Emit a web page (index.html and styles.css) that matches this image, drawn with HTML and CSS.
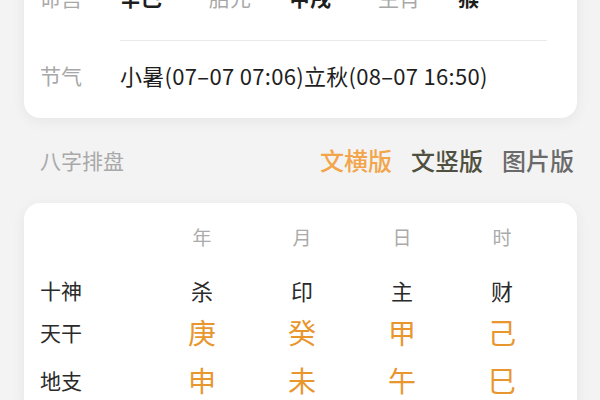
FILE: index.html
```html
<!DOCTYPE html>
<html lang="zh">
<head>
<meta charset="utf-8">
<link rel="stylesheet" href="styles.css">
</head>
<body>
<div class="page">
  <section class="card info">
    <div class="row row-top">
      <div class="pair"><span class="label">命宫</span><span class="val strong">辛巳</span></div>
      <div class="pair"><span class="label">胎元</span><span class="val strong">甲戌</span></div>
      <div class="pair"><span class="label">生肖</span><span class="val strong">猴</span></div>
    </div>
    <div class="divider"></div>
    <div class="row row-jq">
      <span class="label">节气</span><span class="val jq">小暑(07–07 07:06)立秋(08–07 16:50)</span>
    </div>
  </section>

  <div class="section-head">
    <span class="section-title">八字排盘</span>
    <div class="tabs">
      <span class="tab tab-active">文横版</span>
      <span class="tab tab-dark">文竖版</span>
      <span class="tab tab-gray">图片版</span>
    </div>
  </div>

  <section class="card pan">
    <div class="grid head">
      <span></span><span class="col-h">年</span><span class="col-h">月</span><span class="col-h">日</span><span class="col-h">时</span>
    </div>
    <div class="grid r-shen">
      <span class="rlabel">十神</span><span class="cell">杀</span><span class="cell">印</span><span class="cell">主</span><span class="cell">财</span>
    </div>
    <div class="grid r-gan">
      <span class="rlabel">天干</span><span class="gz">庚</span><span class="gz">癸</span><span class="gz">甲</span><span class="gz">己</span>
    </div>
    <div class="grid r-zhi">
      <span class="rlabel">地支</span><span class="gz">申</span><span class="gz">未</span><span class="gz">午</span><span class="gz">巳</span>
    </div>
  </section>
</div>
</body>
</html>
```

FILE: styles.css
```css
html, body {
  margin: 0;
  padding: 0;
}
body {
  background: #f3f3f3;
  font-family: "Noto Sans CJK SC", "Noto Sans", sans-serif;
  color: #222;
  overflow: hidden;
}
.page {
  padding: 0 23px 0 24px;
}
.card {
  background: #fff;
  border-radius: 16px;
  box-shadow: 0 3px 14px rgba(0, 0, 0, 0.06);
}
.info {
  margin-top: -46px;
  padding: 0 30px 7px 16px;
}
.row {
  display: flex;
  align-items: center;
  font-size: 21px;
}
.row-top {
  height: 86px;
}
.pair {
  display: flex;
  width: 200px;
}
.label {
  width: 80px;
  flex: none;
  color: #a8a8a8;
}
.val {
  color: #1e1e1e;
  white-space: nowrap;
}
.strong {
  font-weight: 700;
}
.jq {
  font-size: 22px;
  letter-spacing: 0.3px;
}
.divider {
  margin-left: 80px;
  height: 1px;
  background: #e9e9e9;
}
.row-jq {
  height: 68px;
  padding-bottom: 2px;
}
.section-head {
  display: flex;
  align-items: center;
  justify-content: space-between;
  height: 75px;
  padding: 4px 3px 6px 16px;
}
.section-title {
  font-size: 21px;
  color: #a9a9a9;
}
.tabs {
  display: flex;
  gap: 19px;
  font-size: 24px;
  font-weight: 500;
}
.tab-active {
  color: #f2a54a;
}
.tab-dark {
  color: #4f5040;
}
.tab-gray {
  color: #6a6a6a;
}
.pan {
  padding: 0 16px 10px;
}
.grid {
  display: grid;
  grid-template-columns: 112px repeat(4, 100px);
  align-items: center;
}
.grid > span:not(.rlabel) {
  text-align: center;
}
.head {
  height: 66px;
}
.col-h {
  font-size: 19px;
  color: #ababab;
}
.r-shen {
  height: 42px;
}
.r-gan {
  height: 42px;
}
.r-zhi {
  height: 54px;
}
.rlabel {
  font-size: 21px;
  color: #2a2a2a;
}
.cell {
  font-size: 22px;
  color: #2a2a2a;
}
.gz {
  font-size: 28px;
  color: #e8962e;
}
```
